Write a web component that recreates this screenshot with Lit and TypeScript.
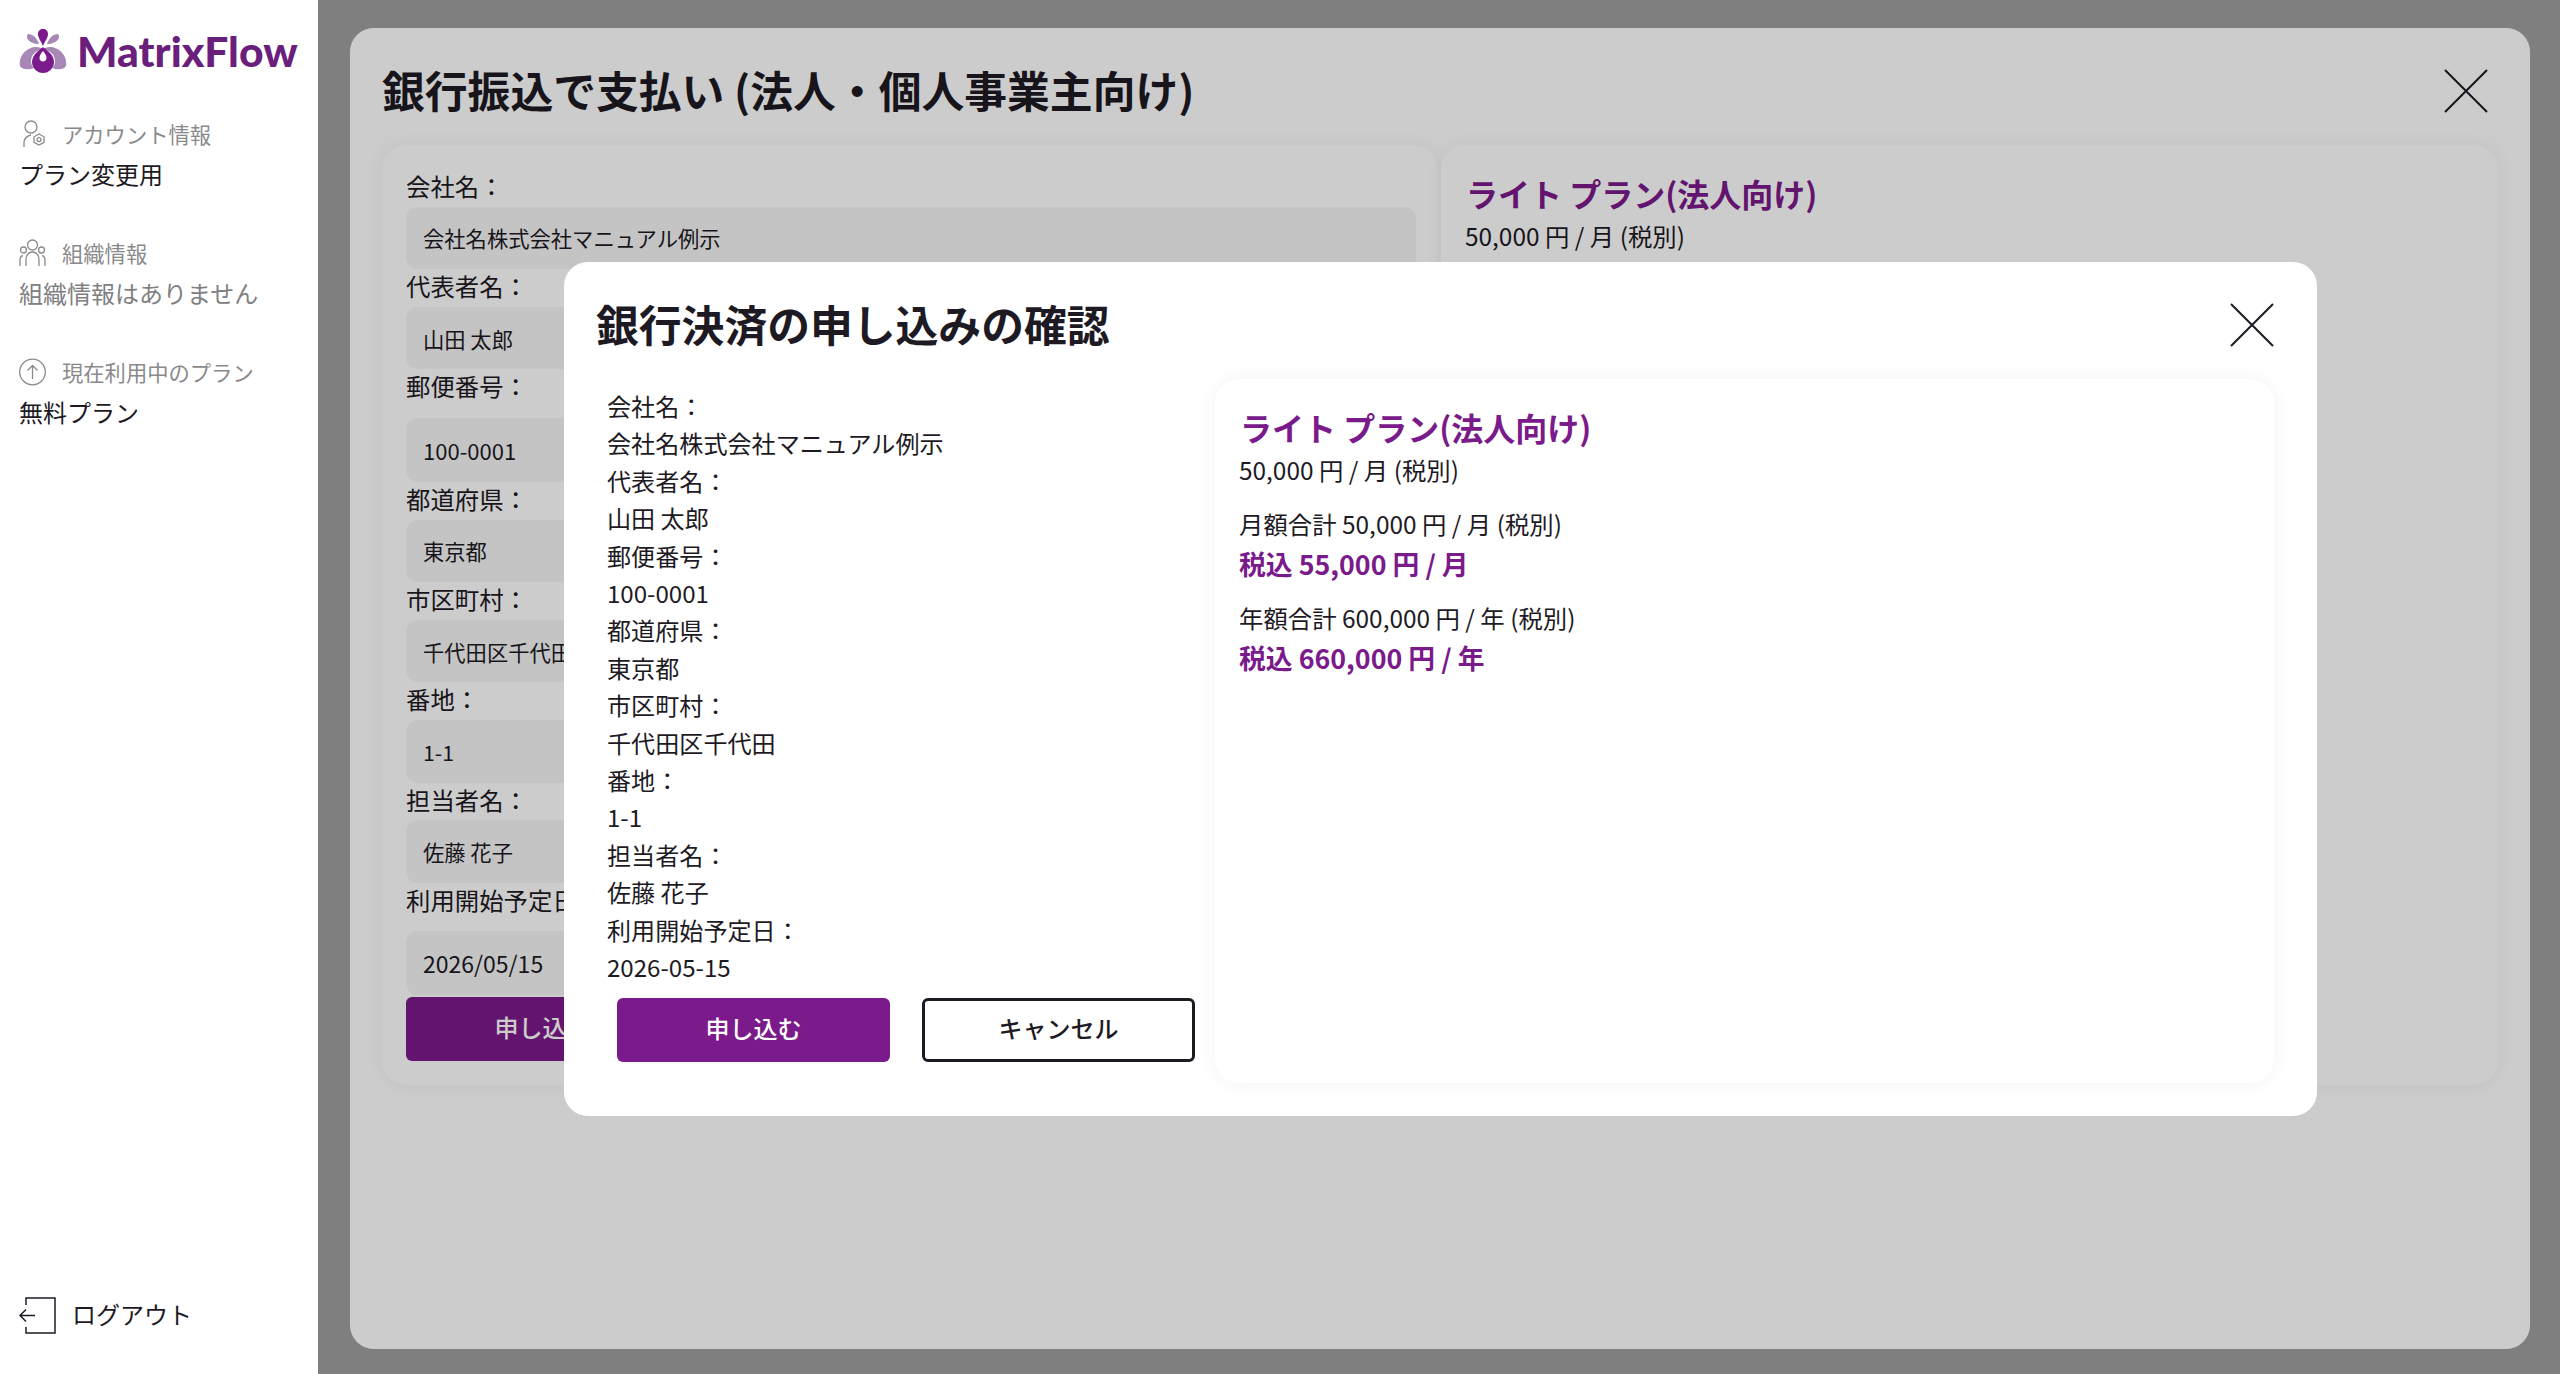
import { LitElement, html, css, svg } from 'lit';
import { customElement } from 'lit/decorators.js';

const FIELDS = [
  { label: '会社名：', input: '会社名株式会社マニュアル例示', confirm: '会社名株式会社マニュアル例示' },
  { label: '代表者名：', input: '山田 太郎', confirm: '山田 太郎' },
  { label: '郵便番号：', input: '100-0001', confirm: '100-0001', tall: true },
  { label: '都道府県：', input: '東京都', confirm: '東京都' },
  { label: '市区町村：', input: '千代田区千代田', confirm: '千代田区千代田' },
  { label: '番地：', input: '1-1', confirm: '1-1' },
  { label: '担当者名：', input: '佐藤 花子', confirm: '佐藤 花子' },
  { label: '利用開始予定日：', input: '2026/05/15', confirm: '2026-05-15', tall: true, date: true },
];

const closeIcon = svg`<svg class="close" viewBox="0 0 44 44" fill="none" stroke="#1d1a24" stroke-width="2"><path d="M1 1 43 43M43 1 1 43"/></svg>`;

@customElement('plan-summary')
export class PlanSummary extends LitElement {
  static styles = css`
    :host { display: block; }
    h3 {
      margin: -1.5px 0 1.5px 1px;
      font-size: 32px;
      line-height: 44px;
      font-weight: 700;
      color: #7b1a8b;
    }
    p { margin: 0; }
    .price { line-height: 40px; }
    .block { margin-top: 14px; }
    .line { line-height: 40px; }
    .tax {
      font-size: 26.8px;
      font-weight: 700;
      line-height: 40px;
      color: #7b1a8b;
    }
  `;

  render() {
    return html`
      <h3>ライト プラン(法人向け)</h3>
      <p class="price">50,000 円 / 月 (税別)</p>
      <div class="block">
        <p class="line">月額合計 50,000 円 / 月 (税別)</p>
        <p class="tax">税込 55,000 円 / 月</p>
      </div>
      <div class="block">
        <p class="line">年額合計 600,000 円 / 年 (税別)</p>
        <p class="tax">税込 660,000 円 / 年</p>
      </div>
    `;
  }
}

@customElement('app-root')
export class AppRoot extends LitElement {
  static styles = css`
    :host {
      display: flex;
      height: 100vh;
      overflow: hidden;
      font-family: 'Noto Sans CJK JP', 'Noto Sans', sans-serif;
      font-size: 24.4px;
      color: #1d1a24;
      background: #7f7f80;
    }
    p, h2 { margin: 0; }

    /* sidebar */
    .sidebar {
      width: 318px;
      flex: none;
      box-sizing: border-box;
      background: #fff;
      padding: 28px 19px 40px;
      display: flex;
      flex-direction: column;
    }
    .logo {
      display: flex;
      align-items: center;
      gap: 10px;
      height: 46px;
      margin-bottom: 39.5px;
      color: #6b1f7d;
      font-family: Lato, 'Noto Sans', sans-serif;
      font-weight: 900;
      font-size: 42.6px;
      line-height: 46px;
    }
    .logo svg { width: 48px; height: 44px; flex: none; }
    .group { margin-bottom: 39px; }
    .group-head {
      display: flex;
      align-items: center;
      gap: 16px;
      height: 40px;
      color: #8a8a8c;
      font-size: 21.3px;
    }
    .group-head svg { width: 27px; height: 28px; flex: none; }
    .group-value { line-height: 40px; font-size: 24px; }
    .group-value.muted { color: #808082; }
    .logout {
      margin-top: auto;
      display: flex;
      align-items: center;
      gap: 16px;
      font-size: 24px;
    }
    .logout span { padding-bottom: 3px; }
    .logout svg { width: 37px; height: 37px; flex: none; }

    /* main */
    .main {
      flex: 1;
      min-width: 0;
      padding: 28px 30px 25px 32px;
      box-sizing: border-box;
      display: flex;
    }
    .panel {
      position: relative;
      flex: 1;
      box-sizing: border-box;
      background: #fff;
      border-radius: 24px;
      padding: 32px;
    }
    .dim {
      position: absolute;
      inset: 0;
      border-radius: inherit;
      background: rgba(0, 0, 0, 0.2);
    }
    .head {
      display: flex;
      justify-content: space-between;
      align-items: center;
      height: 62px;
      margin-bottom: 23px;
    }
    .head h2 {
      font-size: 42.8px;
      line-height: 58px;
      padding-bottom: 4px;
      font-weight: 700;
    }
    .close { width: 44px; height: 44px; flex: none; }
    .panel > .head .close { margin-right: 10px; }
    .cols {
      display: grid;
      grid-template-columns: 1055px 1fr;
      gap: 4px;
      height: 940px;
    }
    .card {
      background: #fff;
      border-radius: 24px;
      box-shadow: 0 0 20px rgba(0, 0, 0, 0.05);
      padding: 24px 21px 24px 24px;
      box-sizing: border-box;
    }
    .card.plan { padding: 27px 24px; }
    .label { line-height: 33.6px; padding-bottom: 4px; }
    .value {
      height: 62.6px;
      box-sizing: border-box;
      padding: 0 17px;
      display: flex;
      align-items: center;
      background: #f5f5f7;
      border-radius: 12px;
      font-size: 21.3px;
    }
    .value.tall { height: 64px; margin-top: 11px; font-size: 22px; }
    .value.date { font-size: 23px; }
    .actions { display: flex; gap: 32px; }
    .btn {
      width: 273px;
      height: 64px;
      box-sizing: border-box;
      padding-bottom: 5px;
      border-radius: 6px;
      display: flex;
      align-items: center;
      justify-content: center;
      font-size: 24px;
      font-weight: 500;
    }
    .btn.primary { background: #7b1a8b; color: #fff; }
    .btn.ghost { background: #fff; border: 3px solid #1d1a24; }
    .form-actions { margin-top: 2px; }

    /* confirm modal */
    .modal {
      position: absolute;
      left: 214px;
      top: 234px;
      width: 1753px;
      height: 854px;
      box-sizing: border-box;
      background: #fff;
      border-radius: 24px;
      padding: 32px 43px 33px 32px;
    }
    .modal-body {
      display: grid;
      grid-template-columns: 619px 1fr;
      height: 704px;
    }
    .confirm { padding: 8px 0 0 11px; font-size: 24.1px; }
    .confirm p { line-height: 37.4px; }
    .confirm .actions { margin: 12.6px 0 0 10px; }
  `;

  render() {
    return html`
      <aside class="sidebar">
        <div class="logo">
          <svg viewBox="0 0 48 44">
            <path fill="#a888b6" d="M1 37C-1 28 7 18 17 18c3 0 6 1 7 2-7 1-12 6-12 12 0 3 1 5 3 7-5 2-12 2-14-2ZM47 37c2-9-6-19-16-19-3 0-6 1-7 2 7 1 12 6 12 12 0 3-1 5-3 7 5 2 12 2 14-2Z"/>
            <path fill="#a888b6" d="M9 5c5 0 9 4 11 10-5 0-10-2-12-6 0-2 0-3 1-4ZM39 5c-5 0-9 4-11 10 5 0 10-2 12-6 0-2 0-3-1-4Z"/>
            <path fill="#7b1a8b" d="M24 0c3 0 5 2 5 5 0 4-3 7-5 12-2-5-5-8-5-12 0-3 2-5 5-5Z"/>
            <path fill="#7b1a8b" fill-rule="evenodd" d="M24 18c2 2 11 7 11 15 0 6-5 11-11 11s-11-5-11-11c0-8 9-13 11-15Zm0 4c-2 2-3.500 5-3.500 7 0 2 1.500 3.500 3.500 3.500s3.500-1.500 3.500-3.500c0-2-1.500-5-3.500-7Z"/>
          </svg>
          <span>MatrixFlow</span>
        </div>
        <div class="group">
          <div class="group-head">
            <svg viewBox="0 0 27 28" fill="none" stroke="#8a8a8c" stroke-width="1.3">
              <circle cx="12" cy="7" r="6"/>
              <path d="M5 27v-4c0-4 3-7 7-8"/>
              <path d="m20 14 5 2.800v5.600L20 25l-5-2.600v-5.600Z"/>
              <circle cx="20" cy="19.600" r="2"/>
            </svg>
            <span>アカウント情報</span>
          </div>
          <p class="group-value">プラン変更用</p>
        </div>
        <div class="group">
          <div class="group-head">
            <svg viewBox="0 0 27 28" fill="none" stroke="#8a8a8c" stroke-width="1.3">
              <circle cx="13.500" cy="6" r="5"/>
              <circle cx="4.500" cy="11" r="3"/>
              <circle cx="22.500" cy="11" r="3"/>
              <path d="M7 27v-7c0-4 3-7 6.500-7s6.500 3 6.500 7v7M1 27v-6c0-2 1-4 3-4.500M26 27v-6c0-2-1-4-3-4.500"/>
            </svg>
            <span>組織情報</span>
          </div>
          <p class="group-value muted">組織情報はありません</p>
        </div>
        <div class="group">
          <div class="group-head">
            <svg viewBox="0 0 27 28" fill="none" stroke="#8a8a8c" stroke-width="1.3">
              <circle cx="13.500" cy="14" r="12.800"/>
              <path d="M13.500 21V8M8.500 12.500 13.500 7.500l5 5"/>
            </svg>
            <span>現在利用中のプラン</span>
          </div>
          <p class="group-value">無料プラン</p>
        </div>
        <div class="logout">
          <svg viewBox="0 0 37 37" fill="none" stroke="#1d1a24" stroke-width="1.5">
            <path d="M7 8V1h29v35H7v-6"/>
            <path d="M16 18.500H1M7 12.500l-6 6 6 6"/>
          </svg>
          <span>ログアウト</span>
        </div>
      </aside>

      <main class="main">
        <section class="panel">
          <div class="head">
            <h2>銀行振込で支払い (法人・個人事業主向け)</h2>
            ${closeIcon}
          </div>
          <div class="cols">
            <div class="card">
              ${FIELDS.map(
                (f) => html`
                  <p class="label">${f.label}</p>
                  <div class="value ${f.tall ? 'tall' : ''} ${f.date ? 'date' : ''}">${f.input}</div>
                `
              )}
              <div class="actions form-actions">
                <div class="btn primary">申し込む</div>
                <div class="btn ghost">キャンセル</div>
              </div>
            </div>
            <div class="card plan"><plan-summary></plan-summary></div>
          </div>
          <div class="dim"></div>

          <div class="modal">
            <div class="head">
              <h2>銀行決済の申し込みの確認</h2>
              ${closeIcon}
            </div>
            <div class="modal-body">
              <div class="confirm">
                ${FIELDS.map((f) => html`<p>${f.label}</p><p>${f.confirm}</p>`)}
                <div class="actions">
                  <div class="btn primary">申し込む</div>
                  <div class="btn ghost">キャンセル</div>
                </div>
              </div>
              <div class="card plan"><plan-summary></plan-summary></div>
            </div>
          </div>
        </section>
      </main>
    `;
  }
}
